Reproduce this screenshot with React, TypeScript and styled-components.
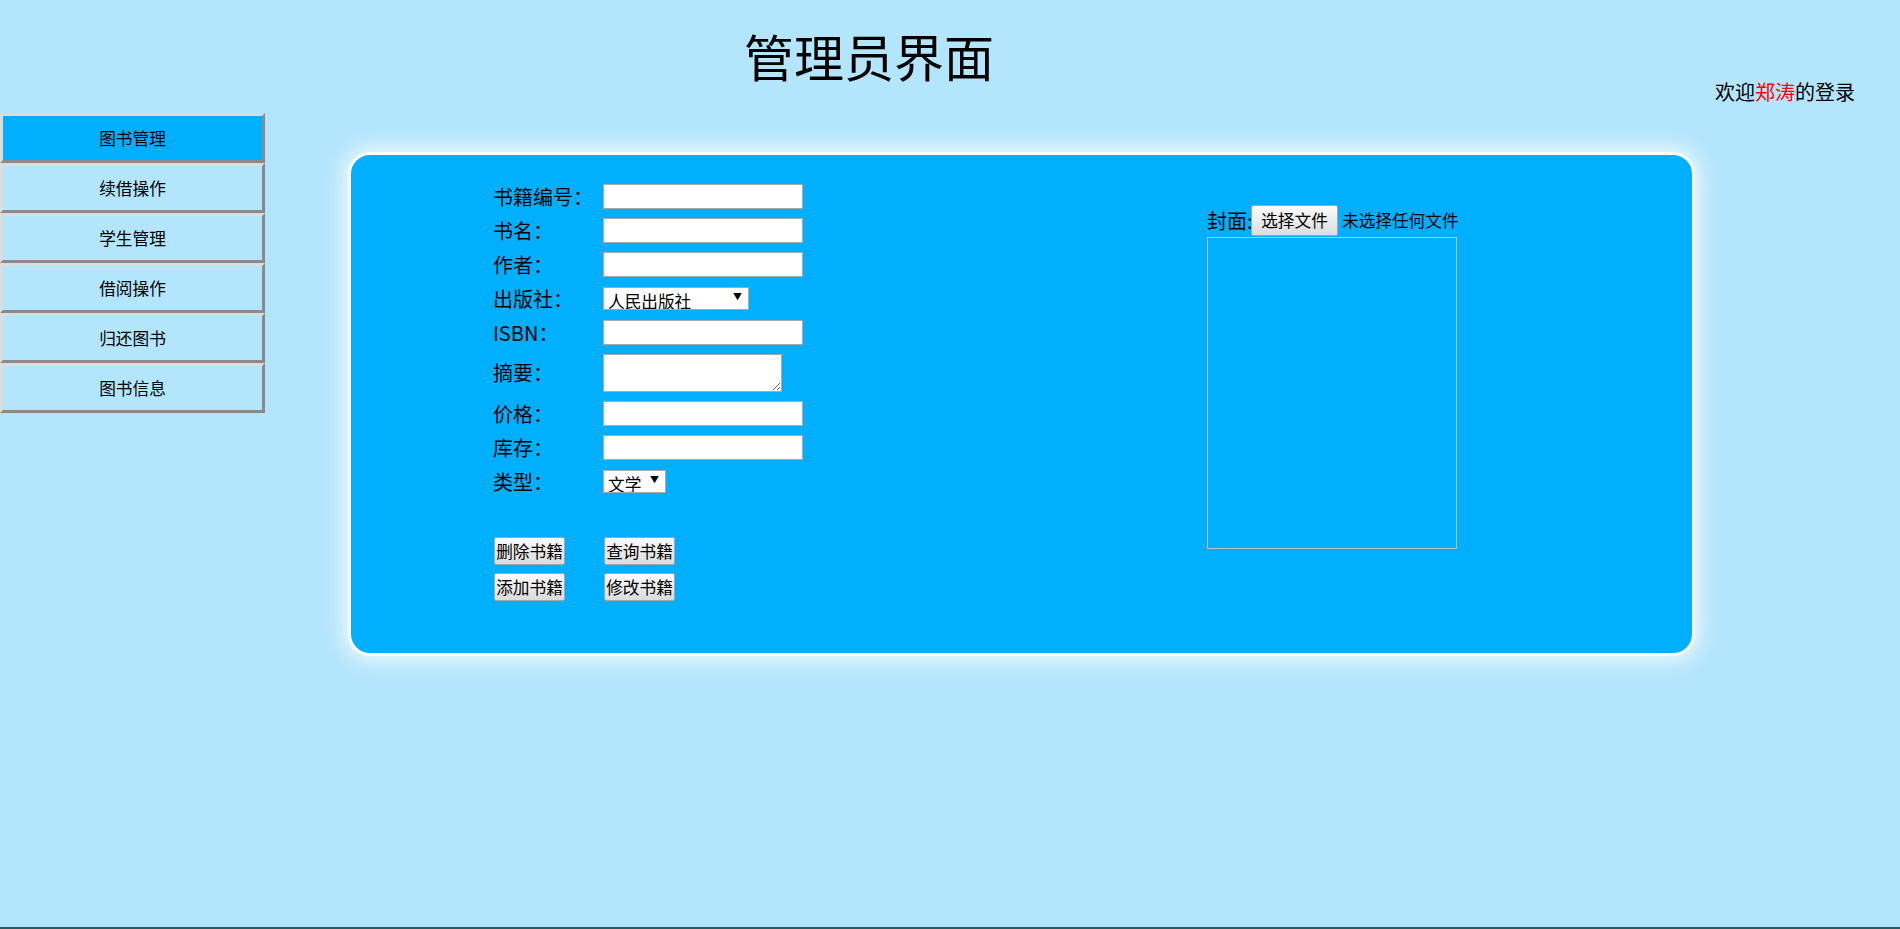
import React from "react";
import styled, { createGlobalStyle } from "styled-components";

const GlobalStyle = createGlobalStyle`
  html, body { margin: 0; padding: 0; }
  body {
    background: #b3e5fc;
    color: #000;
    font-family: "Noto Sans CJK SC", "Noto Sans", sans-serif;
  }
  * { box-sizing: border-box; }
`;

const Page = styled.div`
  min-height: 100vh;
  display: flex;
  flex-direction: column;
`;

const Header = styled.header`
  height: 113px;
  display: flex;
  justify-content: space-between;
  align-items: flex-start;
  padding: 30px 45px 0 744px;
`;

const Title = styled.h1`
  margin: 0;
  font-size: 50px;
  line-height: 50px;
  font-weight: 400;
`;

const Welcome = styled.div`
  margin-top: 52px;
  font-size: 20px;
  line-height: 20px;
`;

const Name = styled.span`
  color: #ff0000;
`;

const Main = styled.main`
  display: flex;
  align-items: flex-start;
`;

const Sidebar = styled.nav`
  width: 265px;
  display: flex;
  flex-direction: column;
`;

const NavButton = styled.div<{ $active?: boolean }>`
  height: 50px;
  border: 3px solid;
  border-color: #dcdcdc #8a8a8a #8a8a8a #dcdcdc;
  background: ${(p) => (p.$active ? "#00b0ff" : "transparent")};
  font-size: 16.67px;
  display: flex;
  align-items: center;
  justify-content: center;
`;

const Panel = styled.section`
  margin: 39px 0 0 83px;
  width: 1347px;
  height: 504px;
  border: 3px solid #fff;
  border-radius: 22px;
  background: #00b0ff;
  box-shadow: 0 0 22px 4px rgba(255, 255, 255, 0.85);
  display: flex;
  align-items: flex-start;
  padding: 24.5px 0 0 142px;
`;

const FormBlock = styled.div`
  width: 714px;
  flex-shrink: 0;
  display: flex;
  flex-direction: column;
`;

const FieldRow = styled.div<{ $tall?: boolean }>`
  display: grid;
  grid-template-columns: 110px auto;
  align-items: center;
  justify-items: start;
  height: ${(p) => (p.$tall ? 47 : 34)}px;
`;

const Label = styled.label`
  font-size: 20px;
  line-height: 1;
  white-space: nowrap;
`;

const TextInput = styled.input`
  width: 200px;
  height: 25px;
  border: 1px solid #a9a9a9;
  background: #fff;
  padding: 0 3px;
  font-size: 16px;
  font-family: inherit;
  outline: none;
`;

const TextArea = styled.textarea`
  width: 179px;
  height: 38px;
  border: 1px solid #a9a9a9;
  background: #fff;
  padding: 2px;
  font-family: inherit;
  font-size: 16px;
  outline: none;
`;

const SelectWrap = styled.div<{ $w: number }>`
  position: relative;
  width: ${(p) => p.$w}px;
  height: 23px;
  &::after {
    content: "▼";
    position: absolute;
    right: 7px;
    top: 5px;
    font-size: 9px;
    line-height: 1;
    pointer-events: none;
  }
`;

const Select = styled.select`
  appearance: none;
  -webkit-appearance: none;
  width: 100%;
  height: 23px;
  border: 1px solid #a9a9a9;
  border-radius: 0;
  background: #fff;
  color: #000;
  padding: 4px 0 0 4px;
  font-family: inherit;
  font-size: 16.67px;
  line-height: 18px;
  outline: none;
`;

const ButtonGrid = styled.div`
  display: grid;
  grid-template-columns: 110px auto;
  justify-items: start;
  row-gap: 8px;
  margin-top: 38.5px;
  padding-left: 1px;
`;

const ActionButton = styled.button`
  width: 71px;
  height: 28px;
  padding: 0;
  border: 1px solid #a6a6a6;
  border-radius: 2px;
  background: linear-gradient(#fbfbfb, #dcdcdc);
  color: #000;
  font-family: inherit;
  font-size: 16.67px;
  line-height: 1;
`;

const CoverBlock = styled.div`
  margin-top: 25.5px;
  display: flex;
  flex-direction: column;
`;

const CoverRow = styled.div`
  display: flex;
  align-items: center;
  height: 31px;
  white-space: nowrap;
`;

const CoverLabel = styled.span`
  font-size: 20px;
  line-height: 1;
  flex-shrink: 0;
  width: 44px;
`;

const FileButton = styled(ActionButton)`
  width: 87px;
  height: 31px;
  flex-shrink: 0;
`;

const FileHint = styled.span`
  margin-left: 4px;
  font-size: 16.67px;
  line-height: 1;
`;

const CoverBox = styled.div`
  margin-top: 1px;
  width: 250px;
  height: 312px;
  border: 1px solid #c0c0c0;
`;

const Footer = styled.footer`
  margin-top: auto;
  height: 2px;
  background: #2b5a5e;
`;

const navItems = ["图书管理", "续借操作", "学生管理", "借阅操作", "归还图书", "图书信息"];

export default function App() {
  return (
    <>
      <GlobalStyle />
      <Page>
        <Header>
          <Title>管理员界面</Title>
          <Welcome>
            欢迎<Name>郑涛</Name>的登录
          </Welcome>
        </Header>
        <Main>
          <Sidebar>
            {navItems.map((t, i) => (
              <NavButton key={t} $active={i === 0}>
                {t}
              </NavButton>
            ))}
          </Sidebar>
          <Panel>
            <FormBlock>
              <FieldRow>
                <Label>书籍编号：</Label>
                <TextInput />
              </FieldRow>
              <FieldRow>
                <Label>书名：</Label>
                <TextInput />
              </FieldRow>
              <FieldRow>
                <Label>作者：</Label>
                <TextInput />
              </FieldRow>
              <FieldRow>
                <Label>出版社：</Label>
                <SelectWrap $w={146}>
                  <Select defaultValue="人民出版社">
                    <option>人民出版社</option>
                    <option>清华大学出版社</option>
                  </Select>
                </SelectWrap>
              </FieldRow>
              <FieldRow>
                <Label>ISBN：</Label>
                <TextInput />
              </FieldRow>
              <FieldRow $tall>
                <Label>摘要：</Label>
                <TextArea />
              </FieldRow>
              <FieldRow>
                <Label>价格：</Label>
                <TextInput />
              </FieldRow>
              <FieldRow>
                <Label>库存：</Label>
                <TextInput />
              </FieldRow>
              <FieldRow>
                <Label>类型：</Label>
                <SelectWrap $w={63}>
                  <Select defaultValue="文学">
                    <option>文学</option>
                    <option>科技</option>
                  </Select>
                </SelectWrap>
              </FieldRow>
              <ButtonGrid>
                <ActionButton>删除书籍</ActionButton>
                <ActionButton>查询书籍</ActionButton>
                <ActionButton>添加书籍</ActionButton>
                <ActionButton>修改书籍</ActionButton>
              </ButtonGrid>
            </FormBlock>
            <CoverBlock>
              <CoverRow>
                <CoverLabel>封面:</CoverLabel>
                <FileButton>选择文件</FileButton>
                <FileHint>未选择任何文件</FileHint>
              </CoverRow>
              <CoverBox />
            </CoverBlock>
          </Panel>
        </Main>
        <Footer />
      </Page>
    </>
  );
}
